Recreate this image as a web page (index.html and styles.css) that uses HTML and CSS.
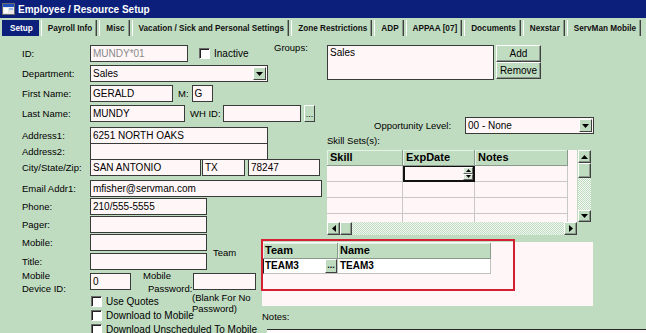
FILE: index.html
```html
<!DOCTYPE html>
<html lang="en">
<head>
    <meta charset="UTF-8">
    <title>Employee / Resource Setup</title>
    <link rel="stylesheet" href="styles.css">
</head>
<body>

<div class="window">
    <div class="titlebar">
        <svg class="app-icon" viewBox="0 0 13 12" width="13" height="12">
            <rect x="0.5" y="0.5" width="12" height="11" fill="#e8e8e8" stroke="#6a6a6a"/>
            <rect x="1" y="1" width="11" height="3" fill="#2050c0"/>
            <rect x="2" y="5" width="4" height="5" fill="#fff"/>
            <rect x="7" y="5" width="4" height="2" fill="#9fb8e0"/>
        </svg>
        <span>Employee / Resource Setup</span>
    </div>

    <!-- tab strip -->
    <div class="tabs">
        <span class="tab active">Setup</span>
        <span class="tab">Payroll Info</span>
        <span class="tab">Misc</span>
        <span class="tab">Vacation / Sick and Personal Settings</span>
        <span class="tab">Zone Restrictions</span>
        <span class="tab">ADP</span>
        <span class="tab">APPAA [07]</span>
        <span class="tab">Documents</span>
        <span class="tab">Nexstar</span>
        <span class="tab">ServMan Mobile</span>
    </div>

    <div class="page">
        <!-- left column: personal info -->
        <div class="left">
            <div class="row">
                <span class="lbl">ID:</span>
                <div class="field w-id muted">MUNDY*01</div>
                <span class="check ml-inactive"></span>
                <span class="check-text">Inactive</span>
            </div>
            <div class="row mt3">
                <span class="lbl">Department:</span>
                <div class="field combo w-wide">Sales<span class="drop"><svg viewBox="0 0 7 4" width="7" height="4"><polygon points="0,0 7,0 3.5,4" fill="#000"/></svg></span></div>
            </div>
            <div class="row mt3">
                <span class="lbl">First Name:</span>
                <div class="field w-first">GERALD</div>
                <span class="inline-lbl ml5">M:</span>
                <div class="field w-mi">G</div>
            </div>
            <div class="row mt3">
                <span class="lbl">Last Name:</span>
                <div class="field w-last">MUNDY</div>
                <span class="inline-lbl ml5 w-whid">WH ID:</span>
                <div class="field w-wh"></div>
                <span class="dots-btn">...</span>
            </div>
            <div class="row mt5">
                <span class="lbl">Address1:</span>
                <div class="field w-wide">6251 NORTH OAKS</div>
            </div>
            <div class="row mtn1">
                <span class="lbl">Address2:</span>
                <div class="field w-wide"></div>
            </div>
            <div class="row mtn1">
                <span class="lbl">City/State/Zip:</span>
                <div class="field w-city">SAN ANTONIO</div>
                <div class="field w-state">TX</div>
                <div class="field w-zip">78247</div>
            </div>
            <div class="row mt4">
                <span class="lbl">Email Addr1:</span>
                <div class="field w-email">mfisher@servman.com</div>
            </div>
            <div class="row mt1">
                <span class="lbl">Phone:</span>
                <div class="field w-phone">210/555-5555</div>
            </div>
            <div class="row mt1">
                <span class="lbl">Pager:</span>
                <div class="field w-phone"></div>
            </div>
            <div class="row mt1">
                <span class="lbl">Mobile:</span>
                <div class="field w-phone"></div>
                <span class="team-lbl">Team</span>
            </div>
            <div class="row mt2">
                <span class="lbl">Title:</span>
                <div class="field w-phone"></div>
            </div>
            <div class="row mt3">
                <span class="lbl two-line">Mobile<br>Device ID:</span>
                <div class="field w-devid">0</div>
                <span class="inline-lbl two-line pw-lbl">Mobile<br><span class="indent">Password:</span></span>
                <div class="field w-pw"></div>
            </div>

            <div class="checks-top">
                <div class="checks">
                    <div class="check-row"><span class="check"></span><span class="check-text">Use Quotes</span></div>
                    <div class="check-row"><span class="check"></span><span class="check-text">Download to Mobile</span></div>
                </div>
                <div class="pw-note">(Blank For No<br>Password)</div>
            </div>
            <div class="check-row last"><span class="check"></span><span class="check-text">Download Unscheduled To Mobile</span></div>
        </div>

        <!-- right column: groups, skills, team -->
        <div class="right">
            <div class="groups-row">
                <span class="groups-lbl">Groups:</span>
                <div class="listbox">Sales</div>
                <div class="btn-col">
                    <span class="btn">Add</span>
                    <span class="btn">Remove</span>
                </div>
            </div>

            <div class="opp-row">
                <span class="opp-lbl">Opportunity Level:</span>
                <div class="field combo w-opp">00 - None<span class="drop"><svg viewBox="0 0 7 4" width="7" height="4"><polygon points="0,0 7,0 3.5,4" fill="#000"/></svg></span></div>
            </div>

            <div class="skills-lbl">Skill Sets(s):</div>
            <div class="skills">
                <div class="sgrid">
                    <span class="hcell">Skill</span>
                    <span class="hcell">ExpDate</span>
                    <span class="hcell">Notes</span>

                    <span class="cell"></span>
                    <span class="cell editing"><span class="spin"><i><svg viewBox="0 0 5 3" width="5" height="3"><polygon points="0,3 5,3 2.5,0"/></svg></i><i><svg viewBox="0 0 5 3" width="5" height="3"><polygon points="0,0 5,0 2.5,3"/></svg></i></span></span>
                    <span class="cell"></span>

                    <span class="cell"></span><span class="cell"></span><span class="cell"></span>
                    <span class="cell"></span><span class="cell"></span><span class="cell"></span>
                    <span class="cell"></span><span class="cell"></span><span class="cell"></span>
                </div>
                <div class="vscroll">
                    <span class="sbtn"><svg viewBox="0 0 7 4" width="7" height="4"><polygon points="0,4 7,4 3.5,0"/></svg></span>
                    <span class="sbtn thumb-v"></span>
                    <span class="track"></span>
                    <span class="sbtn"><svg viewBox="0 0 7 4" width="7" height="4"><polygon points="0,0 7,0 3.5,4"/></svg></span>
                </div>
                <div class="hscroll">
                    <span class="sbtn"><svg viewBox="0 0 4 7" width="4" height="7"><polygon points="4,0 4,7 0,3.5"/></svg></span>
                    <span class="sbtn thumb-h"></span>
                    <span class="track"></span>
                    <span class="sbtn"><svg viewBox="0 0 4 7" width="4" height="7"><polygon points="0,0 0,7 4,3.5"/></svg></span>
                </div>
            </div>

            <div class="team-area">
                <div class="team-panel">
                    <div class="tgrid">
                        <span class="thcell">Team</span>
                        <span class="thcell">Name</span>
                        <span class="tcell team-cell">TEAM3<span class="tdots">...</span></span>
                        <span class="tcell">TEAM3</span>
                    </div>
                </div>
                <div class="highlight"></div>
            </div>

            <div class="notes-lbl">Notes:</div>
            <div class="notes-box"></div>
        </div>

        <div class="frame"></div>
    </div>
</div>

</body>
</html>
```

FILE: styles.css
```css
body {
    margin: 0;
    background-color: #fff;
    font-family: "Liberation Sans", Arial, sans-serif;
    font-size: 9.5px;
    color: #000;
}

.window {
    width: 646px;
    height: 333px;
    overflow: hidden;
    background-color: #c0dcc0;
    display: flex;
    flex-direction: column;
}

/* title bar */
.titlebar {
    height: 18px;
    flex: none;
    background-color: #0b1f7b;
    color: #fff;
    font-weight: bold;
    font-size: 10px;
    display: flex;
    align-items: center;
    padding-left: 2px;
}

.app-icon {
    margin-right: 3px;
}

/* tabs */
.tabs {
    height: 19px;
    flex: none;
    display: flex;
    padding: 2px 0 0 2px;
    box-sizing: border-box;
}

.tab {
    height: 16px;
    display: flex;
    align-items: center;
    padding: 0 4px 0 6px;
    margin-right: 2px;
    border-left: 1px solid #fff;
    border-right: 1px solid #404040;
    box-shadow: inset -1px 0 #8a9a8a;
    font-size: 8.2px;
    font-weight: bold;
    white-space: nowrap;
    color: #111;
}

.tab.active {
    background-color: #0b1f7b;
    color: #fff;
    border-color: #0b1f7b;
    box-shadow: none;
    padding: 0 5px 0 7px;
}

/* page layers */
.page {
    flex: 1;
    display: grid;
    position: relative;
}

.left, .right, .frame {
    grid-area: 1 / 1;
}

.left {
    padding: 8px 0 0 22px;
}

.row {
    display: flex;
    align-items: center;
    height: 17px;
}

.mt1 { margin-top: 1px; }
.mt2 { margin-top: 2px; }
.mt3 { margin-top: 3px; }
.mt4 { margin-top: 4px; }
.mt5 { margin-top: 5px; }
.mtn1 { margin-top: -1px; }
.ml5 { margin-left: 5px; }

.lbl {
    width: 68px;
    flex: none;
    white-space: nowrap;
}

.two-line {
    line-height: 13px;
    align-self: flex-start;
    margin-top: -4px;
}

.inline-lbl {
    white-space: nowrap;
}

.field {
    box-sizing: border-box;
    height: 17px;
    border: 1px solid #3a3a3a;
    background-color: #fff7f7;
    font-size: 10px;
    line-height: 15px;
    padding-left: 2px;
    white-space: nowrap;
    overflow: hidden;
    flex: none;
}

.muted {
    color: #8a8a8a;
}

.w-id { width: 98px; }
.w-wide { width: 178px; }
.w-first { width: 83px; }
.w-mi { width: 21px; margin-left: 3px; }
.w-last { width: 95px; }
.w-whid { width: 33px; }
.w-wh { width: 78px; }
.w-city { width: 111px; }
.w-state { width: 43px; margin-left: 1px; }
.w-zip { width: 72px; margin-left: 3px; }
.w-email { width: 232px; }
.w-phone { width: 117px; }
.w-devid { width: 41px; }
.w-pw { width: 63px; }
.w-opp { width: 129px; }

.combo {
    position: relative;
}

.drop {
    position: absolute;
    top: 1px;
    right: 1px;
    width: 13px;
    height: 13px;
    box-sizing: border-box;
    background-color: #c0dcc0;
    border: 1px solid;
    border-color: #fff #404040 #404040 #fff;
    display: flex;
    align-items: center;
    justify-content: center;
}

.dots-btn {
    width: 11px;
    height: 17px;
    box-sizing: border-box;
    margin-left: 3px;
    border: 1px solid;
    border-color: #fff #404040 #404040 #fff;
    background-color: #c0dcc0;
    font-size: 9px;
    line-height: 17px;
    text-align: center;
    overflow: hidden;
}

.check {
    width: 11px;
    height: 11px;
    box-sizing: border-box;
    flex: none;
    background-color: #fff;
    border: 1px solid;
    border-color: #6a6a6a #fff #fff #6a6a6a;
    box-shadow: inset 1px 1px #222;
}

.ml-inactive {
    margin-left: 11px;
}

.check-text {
    margin-left: 4px;
    white-space: nowrap;
    font-size: 10px;
}

.team-lbl {
    margin-left: 6px;
    align-self: flex-end;
    margin-bottom: -7px;
}

.pw-lbl {
    margin-left: 12px;
    width: 50px;
}

.indent {
    padding-left: 5px;
}

.checks-top {
    display: flex;
    margin: 4px 0 0 68px;
}

.checks {
    width: 102px;
    padding-left: 1px;
    box-sizing: border-box;
}

.check-row {
    display: flex;
    align-items: center;
    height: 14px;
}

.check-row.last {
    margin-left: 69px;
}

.pw-note {
    line-height: 11px;
    margin-top: -2px;
    white-space: nowrap;
}

/* right layer */
.right {
    padding: 8px 0 0 261px;
    display: flex;
    flex-direction: column;
    align-items: flex-start;
}

.groups-row {
    display: flex;
    margin-left: 13px;
}

.groups-lbl {
    width: 53px;
    line-height: 12px;
    margin-top: -3px;
}

.listbox {
    width: 167px;
    height: 35px;
    box-sizing: border-box;
    border: 1px solid #3a3a3a;
    background-color: #fff7f7;
    font-size: 10px;
    line-height: 13px;
    padding-left: 2px;
}

.btn-col {
    display: flex;
    flex-direction: column;
    margin-left: 2px;
}

.btn {
    width: 45px;
    height: 17px;
    box-sizing: border-box;
    border: 1px solid;
    border-color: #fff #404040 #404040 #fff;
    box-shadow: inset -1px -1px #8a9a8a;
    background-color: #c0dcc0;
    font-size: 10px;
    text-align: center;
    line-height: 15px;
}

.opp-row {
    display: flex;
    align-items: center;
    margin: 37px 0 0 113px;
}

.opp-lbl {
    width: 91px;
    white-space: nowrap;
}

.skills-lbl {
    margin-left: 66px;
    line-height: 12px;
    margin-top: 1px;
}

.skills {
    margin: 3px 0 0 66px;
    display: grid;
    grid-template-columns: 250px 1px 13px;
    grid-template-rows: 72px 13px;
}

.sgrid {
    display: grid;
    grid-template-columns: 76px 72px 93px;
    grid-auto-rows: 16px;
    background-color: #fff7f7;
    overflow: hidden;
    height: 72px;
}

.hcell {
    box-sizing: border-box;
    background-color: #c0dcc0;
    border-right: 1px solid #8a9a8a;
    border-bottom: 1px solid #8a9a8a;
    box-shadow: inset 1px 1px #e6f2e6;
    font-weight: bold;
    font-size: 11px;
    line-height: 15px;
    padding-left: 3px;
}

.cell {
    box-sizing: border-box;
    border-right: 1px solid #c8c8c8;
    border-bottom: 1px solid #c8c8c8;
    position: relative;
}

.cell.editing {
    border: 2px solid #111;
    border-top-width: 1px;
}

.spin {
    position: absolute;
    right: 0;
    top: 0;
    width: 10px;
    height: 13px;
    display: flex;
    flex-direction: column;
}

.spin i {
    flex: 1;
    box-sizing: border-box;
    border: 1px solid;
    border-color: #fff #606060 #606060 #fff;
    background-color: #d8e8d8;
    display: flex;
    align-items: center;
    justify-content: center;
}

.vscroll {
    grid-column: 3;
    display: flex;
    flex-direction: column;
}

.hscroll {
    grid-column: 1;
    display: flex;
}

.sbtn {
    width: 13px;
    height: 13px;
    flex: none;
    box-sizing: border-box;
    background-color: #c0dcc0;
    border: 1px solid;
    border-color: #fff #404040 #404040 #fff;
    box-shadow: inset -1px -1px #8a9a8a;
    display: flex;
    align-items: center;
    justify-content: center;
}

.vscroll .thumb-v {
    height: 15px;
}

.hscroll .thumb-h {
    width: 12px;
}

.track {
    flex: 1;
    background: repeating-conic-gradient(#f4f8f4 0 25%, #c0dcc0 0 50%) 0 0 / 2px 2px;
}

.vscroll .sbtn:last-child {
    height: 12px;
}

/* team grid */
.team-area {
    position: relative;
    margin-top: 4px;
}

.team-panel {
    margin: 3px 0 0 1px;
    width: 331px;
    height: 64px;
    background-color: #fff7f7;
    padding: 1px 0 0 1px;
    box-sizing: border-box;
}

.tgrid {
    display: grid;
    grid-template-columns: 75px 153px;
    grid-template-rows: 16px 15px;
}

.thcell {
    box-sizing: border-box;
    background-color: #c0dcc0;
    border-right: 1px solid #8a9a8a;
    border-bottom: 1px solid #8a9a8a;
    box-shadow: inset 1px 1px #e6f2e6;
    font-weight: bold;
    font-size: 11px;
    line-height: 15px;
    padding-left: 2px;
}

.tcell {
    box-sizing: border-box;
    background-color: #fff;
    border-right: 1px solid #c0c0c0;
    border-bottom: 1px solid #c0c0c0;
    font-weight: bold;
    font-size: 10px;
    line-height: 14px;
    padding-left: 2px;
}

.team-cell {
    display: flex;
    justify-content: space-between;
    border-left: 1px solid #222;
    padding-left: 1px;
    padding-right: 0;
}

.tdots {
    width: 12px;
    box-sizing: border-box;
    background-color: #c0dcc0;
    border: 1px solid;
    border-color: #fff #404040 #404040 #fff;
    font-size: 9px;
    line-height: 10px;
    text-align: center;
}

.highlight {
    position: absolute;
    left: 0;
    top: 0;
    width: 254px;
    height: 52px;
    border: 2px solid #d51f33;
    box-sizing: border-box;
}

.notes-lbl {
    margin: 5px 0 0 1px;
    line-height: 12px;
}

.notes-box {
    margin: 6px 0 0 6px;
    width: 400px;
    height: 20px;
    border-top: 1px solid #2a2a2a;
    background-color: #fdfbfb;
}

.frame {
    justify-self: end;
    align-self: start;
    margin-top: 13px;
    width: 7px;
    height: 189px;
    box-sizing: border-box;
    border: 1px solid #404040;
    border-right: none;
    box-shadow: inset 1px 1px #909090;
}
```
